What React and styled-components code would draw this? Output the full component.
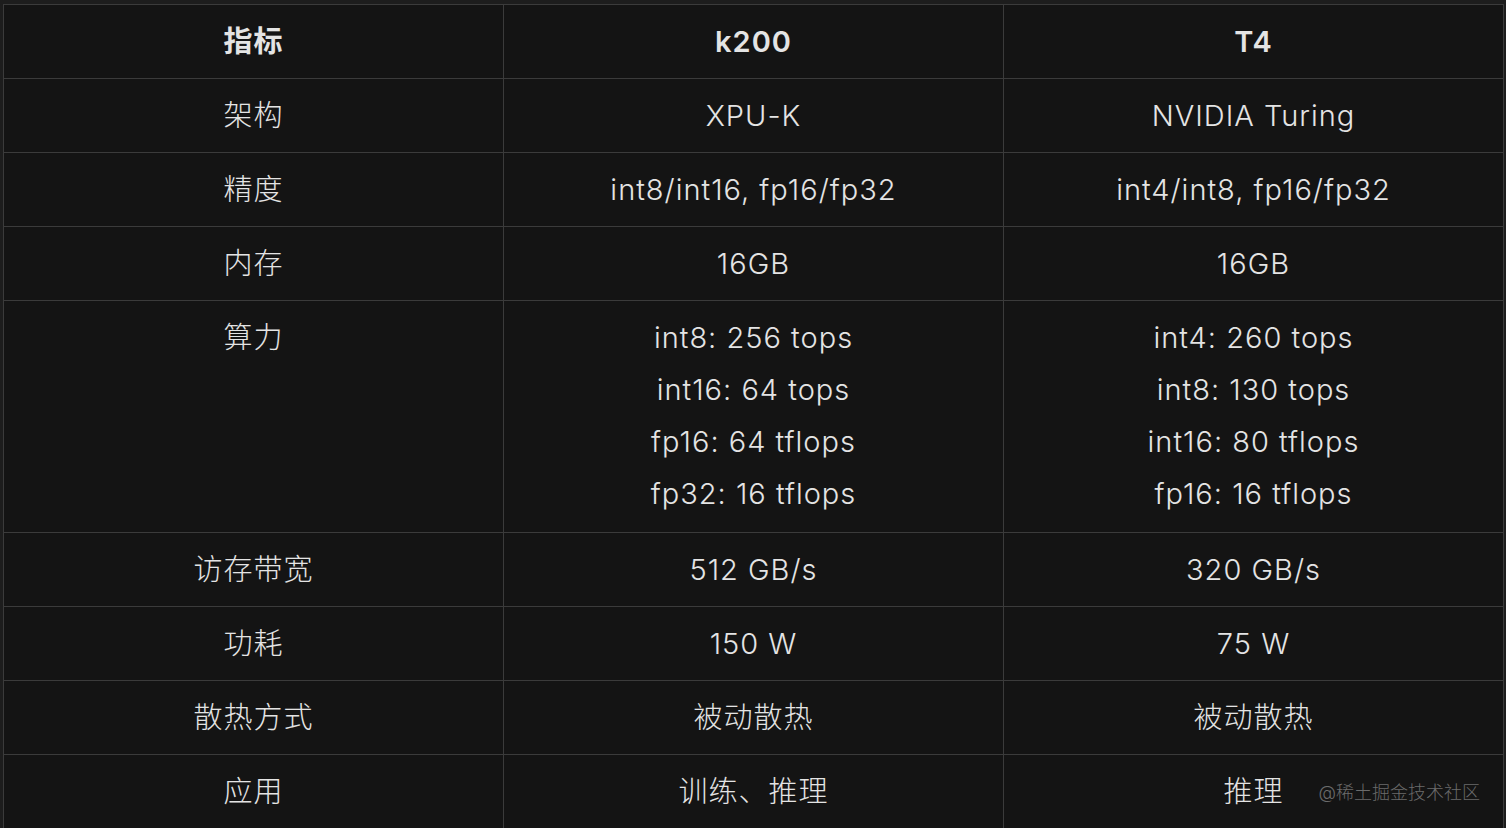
import React from 'react';
import styled, { createGlobalStyle } from 'styled-components';

const GlobalStyle = createGlobalStyle`
  body {
    margin: 0;
    background: #1d1d1d;
    font-family: Inter, "Noto Sans CJK SC", sans-serif;
  }
`;

const Page = styled.div`
  position: relative;
  padding: 4px 2px 0 3px;
  height: 828px;
  box-sizing: border-box;
  overflow: hidden;
`;

const Table = styled.table`
  width: 1501px;
  border-collapse: collapse;
  table-layout: fixed;
  background: #141414;
  color: #e4e4e4;
  font-size: 29px;
  letter-spacing: 1px;
`;

const Cell = styled.td`
  border: 1px solid #3b3b3b;
  padding: 11px 16px ${(p) => (p.$tall ? 12 : 10)}px;
  line-height: 52px;
  text-align: center;
  vertical-align: top;
  font-weight: ${(p) => (p.$head ? 600 : 300)};
`;

const Line = styled.div`
  white-space: nowrap;
`;

const Watermark = styled.div`
  position: absolute;
  right: 26px;
  bottom: 24px;
  font-size: 18px;
  font-weight: 300;
  color: #6b6b6b;
`;

const rows = [
  ['架构', ['XPU-K'], ['NVIDIA Turing']],
  ['精度', ['int8/int16, fp16/fp32'], ['int4/int8, fp16/fp32']],
  ['内存', ['16GB'], ['16GB']],
  [
    '算力',
    ['int8: 256 tops', 'int16: 64 tops', 'fp16: 64 tflops', 'fp32: 16 tflops'],
    ['int4: 260 tops', 'int8: 130 tops', 'int16: 80 tflops', 'fp16: 16 tflops'],
  ],
  ['访存带宽', ['512 GB/s'], ['320 GB/s']],
  ['功耗', ['150 W'], ['75 W']],
  ['散热方式', ['被动散热'], ['被动散热']],
  ['应用', ['训练、推理'], ['推理']],
];

const App = () => (
  <Page>
    <GlobalStyle />
    <Table>
      <tbody>
        <tr>
          <Cell $head>指标</Cell>
          <Cell $head>k200</Cell>
          <Cell $head>T4</Cell>
        </tr>
        {rows.map(([label, a, b]) => {
          const tall = a.length > 1;
          return (
            <tr key={label}>
              <Cell $tall={tall}>{label}</Cell>
              <Cell $tall={tall}>
                {a.map((t) => (
                  <Line key={t}>{t}</Line>
                ))}
              </Cell>
              <Cell $tall={tall}>
                {b.map((t) => (
                  <Line key={t}>{t}</Line>
                ))}
              </Cell>
            </tr>
          );
        })}
      </tbody>
    </Table>
    <Watermark>@稀土掘金技术社区</Watermark>
  </Page>
);

export default App;
